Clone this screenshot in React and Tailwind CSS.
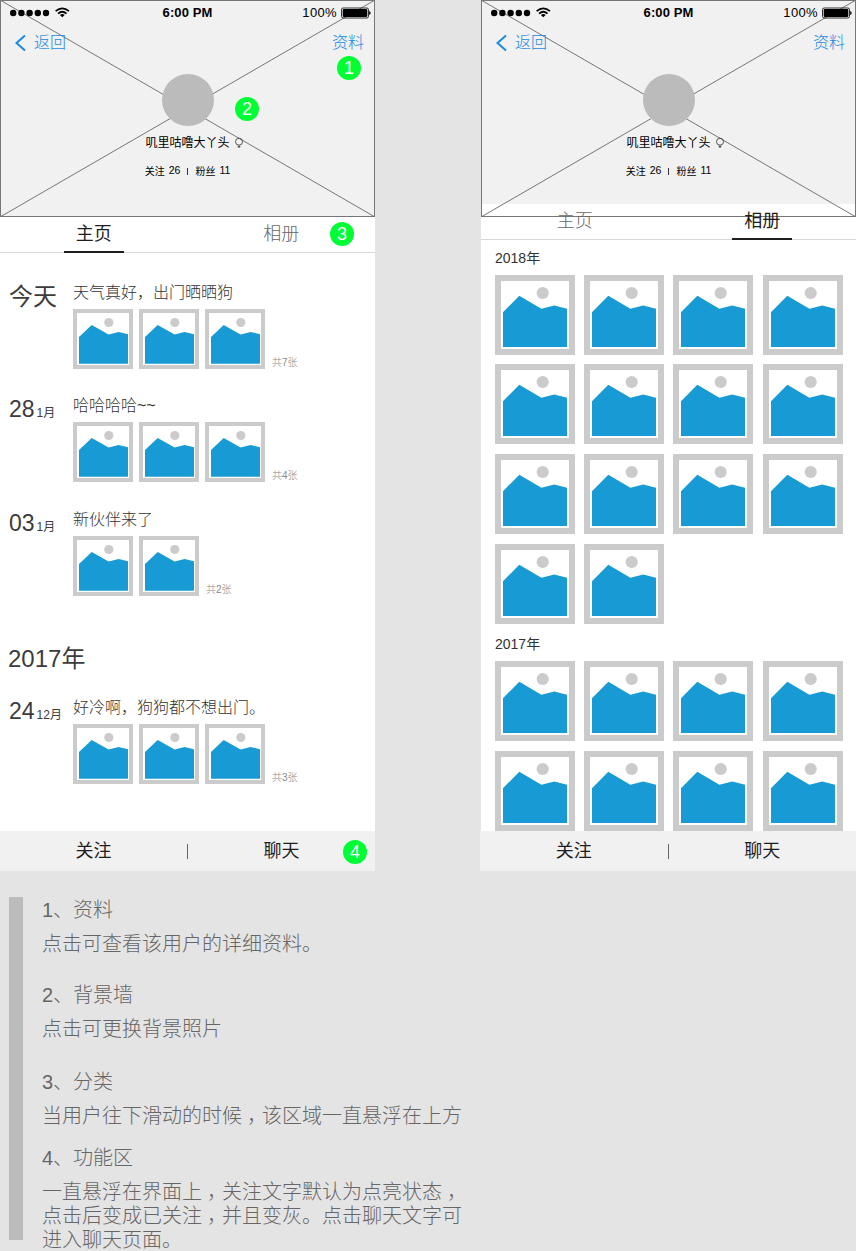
import React from "react";

function SmallPhoto() {
  return (
    <div className="h-[60px] w-[60px] shrink-0 border-4 border-[#cbcbcb] bg-white">
      <svg width="52" height="52" viewBox="4 4 52 52" className="block">
        <path d="M6 28 L18.7 15.9 L35.6 25.6 L45.6 23 L55 25.3 V54.7 H6 Z" fill="#189bd5" />
        <circle cx="35.8" cy="13.5" r="4.6" fill="#cbcbcb" />
      </svg>
    </div>
  );
}

function LargePhoto() {
  return (
    <div className="h-20 w-20 border-6 border-[#cbcbcb] bg-white">
      <svg width="68" height="68" viewBox="6 6 68 68" className="block">
        <path d="M8 37.2 L24.3 20.7 L46.4 33.8 L59.3 30.5 L72 33.7 V72 H8 Z" fill="#189bd5" />
        <circle cx="47.7" cy="18" r="6.1" fill="#cbcbcb" />
      </svg>
    </div>
  );
}

function Badge({ n, className }) {
  return (
    <span
      className={
        "absolute z-10 flex h-6 w-6 items-center justify-center rounded-full bg-[#00ff33] text-[18px] leading-none text-white " +
        className
      }
    >
      {n}
    </span>
  );
}

function StatusBar() {
  return (
    <div className="flex h-[26px] items-center text-black">
      <div className="flex w-[125px] items-center pl-[9px]">
        <svg width="62" height="14" viewBox="9 6 62 14">
          {[13.2, 21.4, 29.6, 37.8, 46].map((x) => (
            <circle key={x} cx={x} cy="13" r="3.2" />
          ))}
          <g fill="none" stroke="#000" strokeWidth="1.8">
            <path d="M55.6 11.1 Q62.3 5.6 69 11.1" />
            <path d="M58.1 13.6 Q62.3 10 66.5 13.6" />
          </g>
          <path d="M59.9 14.9 Q62.3 13.1 64.7 14.9 L62.3 17.3 Z" />
        </svg>
      </div>
      <div className="w-[125px] text-center text-[13px] font-bold tracking-[0.1px]">6:00 PM</div>
      <div className="flex w-[125px] items-center justify-end pr-[4px]">
        <span className="mr-[4px] text-[13px] tracking-[0.35px]">100%</span>
        <svg width="30" height="12" viewBox="0 0 30 12">
          <rect x="0.5" y="1" width="27" height="10" rx="1.6" fill="none" stroke="#000" strokeWidth="0.8" />
          <rect x="1.7" y="2.1" width="24.6" height="7.8" rx="0.8" />
          <path d="M28.2 4 Q29.7 4.6 29.7 6 Q29.7 7.4 28.2 8 Z" />
        </svg>
      </div>
    </div>
  );
}

function Header({ notes }) {
  return (
    <div className="relative h-[217px] bg-[#f1f1f1]">
      <svg width="375" height="217" className="absolute inset-0" fill="none" stroke="#767676">
        <rect x="0.5" y="0.5" width="374" height="216" />
        <path d="M0 0 L375 217 M375 0 L0 217" />
      </svg>
      <div className="relative">
        <StatusBar />
        <div className="flex h-[34px] items-center justify-between pr-[11px] pl-[14px] text-[16px] font-light text-[#1a8ae0]">
          <div className="flex items-center">
            <svg width="14" height="18" viewBox="0 0 14 18" fill="none" stroke="#1a8ae0" strokeWidth="2">
              <path d="M11 1.5 L2.5 9 L11 16.5" />
            </svg>
            <span className="ml-[6px]">返回</span>
          </div>
          <span>资料</span>
        </div>
        <div className="flex flex-col items-center pt-[14px] text-black">
          <div className="h-[52px] w-[52px] rounded-full bg-[#bbbbbb]" />
          <div className="mt-[9px] flex h-4 items-center pl-[14px] text-[12px]">
            <span>叽里咕噜大丫头</span>
            <svg width="10" height="12" viewBox="0 0 10 12" className="ml-1" fill="none" stroke="#444" strokeWidth="0.9">
              <circle cx="5" cy="4.7" r="3.5" />
              <path d="M5 8.2 V11 M3.6 9.7 H6.4" />
            </svg>
          </div>
          <div className="mt-3 flex h-4 items-center text-[10px]">
            <span>关注</span>
            <span className="ml-[4px] text-[10.5px]">26</span>
            <span className="ml-[7px] h-[7px] w-px bg-[#333]" />
            <span className="ml-[7px]">粉丝</span>
            <span className="ml-[4px] text-[10.5px]">11</span>
          </div>
        </div>
      </div>
      {notes && <Badge n="1" className="top-[56px] left-[337px]" />}
      {notes && <Badge n="2" className="top-[97px] left-[235px]" />}
    </div>
  );
}

function Tabs({ active, notes }) {
  return (
    <div className="relative flex h-9 justify-around border-b border-[#d8d8d8] text-[18px]">
      {["主页", "相册"].map((t) => (
        <div
          key={t}
          className={
            t === active
              ? "flex h-9 w-[60px] items-center justify-center border-b-2 border-[#1e1e1e] text-[#1e1e1e]"
              : "flex h-9 w-[60px] items-center justify-center border-b-2 border-transparent font-light text-[#666]"
          }
        >
          {t}
        </div>
      ))}
      {notes && <Badge n="3" className="top-[5px] left-[330px]" />}
    </div>
  );
}

function Footer({ notes }) {
  return (
    <div className="relative flex h-10 items-center bg-[#f1f1f1] text-[18px] text-[#1e1e1e]">
      <div className="flex-1 text-center">关注</div>
      <div className="h-[15px] w-px bg-[#666]" />
      <div className="flex-1 text-center">聊天</div>
      {notes && <Badge n="4" className="top-[9px] left-[343px]" />}
    </div>
  );
}

function Entry({ day, month, today, title, photos, total, className }) {
  return (
    <div className={"flex h-[87px] " + className}>
      <div className="w-[73px] pl-[9px] text-[#3c3c3c]">
        {today ? (
          <div className="text-[24px] leading-[30px]">今天</div>
        ) : (
          <div className="flex items-baseline leading-[28px]">
            <span className="text-[23px]">{day}</span>
            <span className="ml-[2px] text-[12px]">{month}</span>
          </div>
        )}
      </div>
      <div>
        <div className="h-[27px] text-[16px] leading-[21px] font-light text-[#333]">{title}</div>
        <div className="flex items-end gap-[6px]">
          {Array.from({ length: photos }, (_, i) => (
            <SmallPhoto key={i} />
          ))}
          <span className="ml-px text-[10px] leading-[13px] font-light text-[#888]">{total}</span>
        </div>
      </div>
    </div>
  );
}

function Notes() {
  const comma = <span className="inline-block w-5 pl-[5px] text-left">，</span>;
  return (
    <div className="mt-[26px] ml-[9px] flex">
      <div className="h-[343px] w-[14px] bg-[#bbbbbb]" />
      <div className="ml-[19px] pt-px text-[20px] leading-6 font-light whitespace-nowrap text-[#666]">
        <p>1、资料</p>
        <p className="mt-[10px]">点击可查看该用户的详细资料。</p>
        <p className="mt-[27px]">2、背景墙</p>
        <p className="mt-[10px]">点击可更换背景照片</p>
        <p className="mt-[29px]">3、分类</p>
        <p className="mt-[10px]">当用户往下滑动的时候{comma}该区域一直悬浮在上方</p>
        <p className="mt-[18px]">4、功能区</p>
        <p className="mt-[10px]">
          一直悬浮在界面上{comma}关注文字默认为点亮状态{comma}
          <br />
          点击后变成已关注{comma}并且变灰。点击聊天文字可
          <br />
          进入聊天页面。
        </p>
      </div>
    </div>
  );
}

export default function App() {
  return (
    <div
      lang="zh-CN"
      className="h-[1251px] w-[856px] overflow-hidden bg-[#e4e4e4] font-['Liberation_Sans','Noto_Sans_CJK_SC',sans-serif]"
    >
      <div className="flex justify-between">
        <section className="flex h-[871px] w-[375px] flex-col bg-white">
          <Header notes />
          <Tabs active="主页" notes />
          <div className="flex-1">
            <Entry today title="天气真好，出门晒晒狗" photos={3} total="共7张" className="mt-[29px]" />
            <Entry day="28" month="1月" title="哈哈哈哈~~" photos={3} total="共4张" className="mt-[26px]" />
            <Entry day="03" month="1月" title="新伙伴来了" photos={2} total="共2张" className="mt-[27px]" />
            <h2 className="mt-[48px] pl-[8px] text-[24px] leading-[30px] text-[#3c3c3c]">2017年</h2>
            <Entry day="24" month="12月" title="好冷啊，狗狗都不想出门。" photos={3} total="共3张" className="mt-[23px]" />
          </div>
          <Footer notes />
        </section>
        <section className="flex h-[871px] w-[376px] flex-col">
          <div className="ml-px flex h-[831px] flex-col overflow-hidden bg-white">
            <Header />
            <Tabs active="相册" />
            <div className="pl-[14px] text-[14px] text-[#333]">
              <div className="h-[35px] leading-[36px]">2018年</div>
              <div className="grid grid-cols-[89px_89px_90px_80px] grid-rows-[89px_90px_90px_80px]">
                {Array.from({ length: 14 }, (_, i) => (
                  <LargePhoto key={i} />
                ))}
              </div>
              <div className="h-[37px] leading-[40px]">2017年</div>
              <div className="grid grid-cols-[89px_89px_90px_80px] grid-rows-[90px_80px]">
                {Array.from({ length: 8 }, (_, i) => (
                  <LargePhoto key={i} />
                ))}
              </div>
            </div>
          </div>
          <Footer />
        </section>
      </div>
      <Notes />
    </div>
  );
}
